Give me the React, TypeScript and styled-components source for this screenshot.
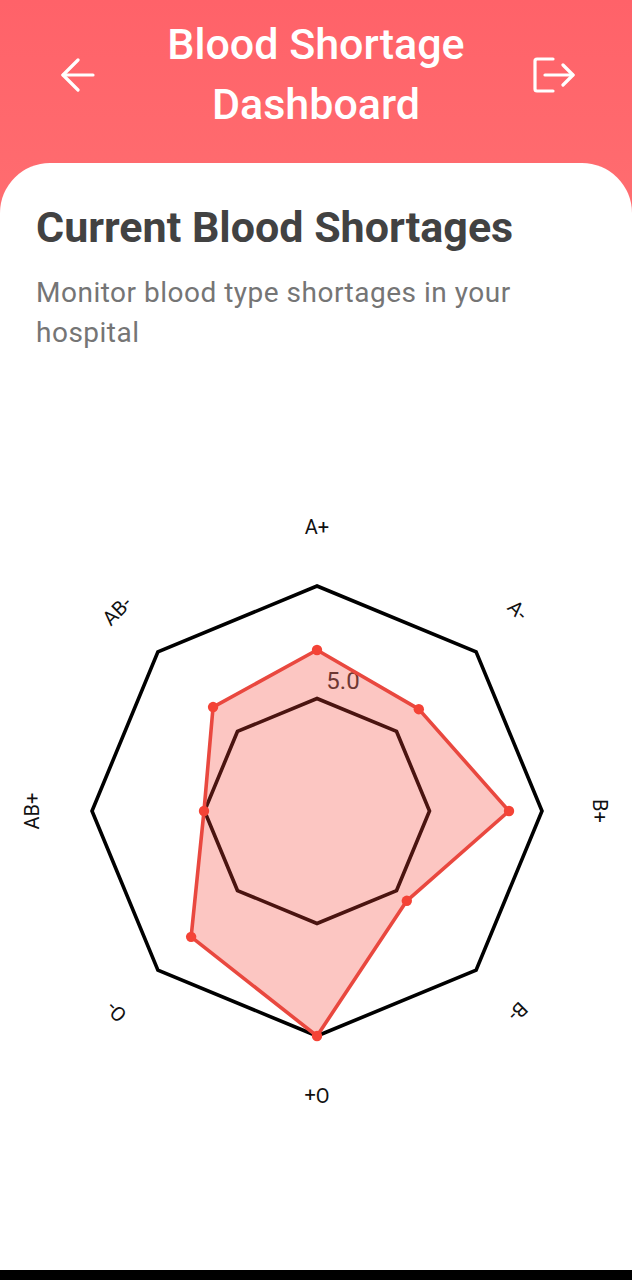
import * as React from 'react'
import styled, { createGlobalStyle } from 'styled-components'

const CX = 317
const CY = 331
const OUTER = 225
const INNER = 112.5

const TYPES = [
	{ label: 'A+', value: 161, labelR: 284 },
	{ label: 'A-', value: 144, labelR: 284 },
	{ label: 'B+', value: 192, labelR: 283 },
	{ label: 'B-', value: 127, labelR: 284 },
	{ label: 'O+', value: 225, labelR: 284 },
	{ label: 'O-', value: 178, labelR: 284 },
	{ label: 'AB+', value: 113, labelR: 285 },
	{ label: 'AB-', value: 147, labelR: 283 }
]

const polar = (index: number, r: number) => {
	const angle = (index * Math.PI) / 4
	return { x: CX + r * Math.sin(angle), y: CY - r * Math.cos(angle) }
}

const toPoints = (radii: number[]) =>
	radii.map((r, i) => {
		const p = polar(i, r)
		return `${p.x},${p.y}`
	}).join(' ')

const ring = (r: number) => toPoints(TYPES.map(() => r))

export default function App() {
	return (
		<>
			<GlobalStyle />
			<Page>
				<Header>
					<IconButton aria-label="Back">
						<svg width="34" height="34" viewBox="0 0 34 34" fill="none" stroke="#fff" strokeWidth="3.2" strokeLinecap="round" strokeLinejoin="round">
							<path d="M32 17H2" />
							<path d="M17 2L2 17l15 15" />
						</svg>
					</IconButton>
					<Title>Blood Shortage<br />Dashboard</Title>
					<IconButton aria-label="Log out">
						<svg width="42" height="38" viewBox="0 0 42 38" fill="none" stroke="#fff" strokeWidth="3.2" strokeLinecap="round" strokeLinejoin="round">
							<path d="M20 3H4a2 2 0 0 0-2 2v28a2 2 0 0 0 2 2h16" />
							<path d="M12 19h28" />
							<path d="M30 9l10 10-10 10" />
						</svg>
					</IconButton>
				</Header>
				<Card>
					<Intro>
						<Heading>Current Blood Shortages</Heading>
						<Subheading>Monitor blood type shortages in your hospital</Subheading>
					</Intro>
					<ChartBox>
						<svg width="632" height="660" viewBox="0 0 632 660">
							<polygon points={ring(OUTER)} fill="none" stroke="#000" strokeWidth="3.6" strokeLinejoin="miter" />
							<polygon points={ring(INNER)} fill="none" stroke="#000" strokeWidth="3.6" />
							<TickLabel x="343" y="201">5.0</TickLabel>
							<polygon
								points={toPoints(TYPES.map(t => t.value))}
								fill="rgba(244, 67, 54, 0.3)"
								stroke="#e9483f"
								strokeWidth="3.6"
								strokeLinejoin="round"
							/>
							{TYPES.map((t, i) => {
								const p = polar(i, t.value)
								return <circle key={t.label} cx={p.x} cy={p.y} r="5.2" fill="#f44336" />
							})}
							{TYPES.map((t, i) => {
								const p = polar(i, t.labelR)
								return (
									<AxisLabel
										key={t.label}
										x={p.x}
										y={p.y}
										textAnchor="middle"
										dominantBaseline="central"
										transform={`rotate(${i * 45} ${p.x} ${p.y})`}
									>
										{t.label}
									</AxisLabel>
								)
							})}
						</svg>
					</ChartBox>
				</Card>
				<NavBar />
			</Page>
		</>
	)
}

const GlobalStyle = createGlobalStyle`
	html, body {
		margin: 0;
		padding: 0;
		background: #000;
	}
	* {
		box-sizing: border-box;
	}
`

const Page = styled.div`
	width: 632px;
	height: 1280px;
	display: flex;
	flex-direction: column;
	overflow: hidden;
	font-family: Roboto, "Liberation Sans", sans-serif;
	background: linear-gradient(180deg, #ff6269 0, #ff6d70 215px, #fff 215px);
`

const Header = styled.header`
	height: 163px;
	flex: none;
	display: flex;
	align-items: flex-start;
	justify-content: space-between;
	padding: 14px 56px 0;
`

const IconButton = styled.div`
	width: 44px;
	height: 122px;
	display: flex;
	align-items: center;
	justify-content: center;
	flex: none;
`

const Title = styled.h1`
	margin: 0;
	font-size: 43px;
	line-height: 60px;
	font-weight: 500;
	color: #fff;
	text-align: center;
`

const Card = styled.main`
	flex: 1;
	display: flex;
	flex-direction: column;
	background: #fff;
	border-radius: 50px 50px 0 0;
`

const Intro = styled.section`
	height: 317px;
	padding: 38px 36px 0;
`

const Heading = styled.h2`
	margin: 0 0 20px;
	font-size: 43px;
	line-height: 52px;
	font-weight: 700;
	color: #424242;
`

const Subheading = styled.p`
	margin: 0;
	font-size: 28px;
	line-height: 40px;
	font-weight: 400;
	color: #757575;
	letter-spacing: 0.5px;
`

const ChartBox = styled.section`
	flex: 1;
	min-height: 0;
	background: #fff;
	svg {
		display: block;
	}
`

const AxisLabel = styled.text`
	font-family: Roboto, "Liberation Sans", sans-serif;
	font-size: 20px;
	fill: #111;
`

const TickLabel = styled.text`
	font-family: Roboto, "Liberation Sans", sans-serif;
	font-size: 24px;
	fill: #333;
	text-anchor: middle;
	dominant-baseline: central;
`

const NavBar = styled.div`
	height: 10px;
	flex: none;
	background: #000;
`
